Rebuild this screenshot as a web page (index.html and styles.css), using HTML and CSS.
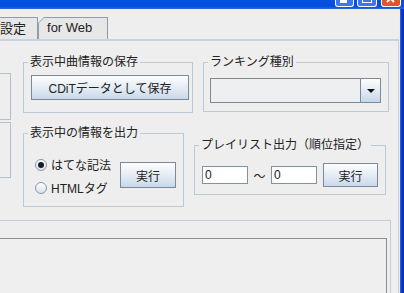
FILE: index.html
```html
<!DOCTYPE html>
<html lang="ja">
<head>
  <meta charset="UTF-8" />
  <title>設定</title>
  <link rel="stylesheet" href="styles.css">
</head>
<body>

  <div class="window">
    <!-- title bar, only the bottom of it is in view -->
    <div class="titlebar">
      <span class="tb-btn tb-min">
        <svg viewBox="0 0 17 6"><rect x="4" y="0" width="7" height="3" fill="#fff"/></svg>
      </span>
      <span class="tb-btn tb-max">
        <svg viewBox="0 0 18 6"><rect x="4.5" y="-4.5" width="9" height="7" fill="none" stroke="#fff"/></svg>
      </span>
      <span class="tb-btn tb-close">
        <svg viewBox="0 0 18 6"><path d="M5 -5 L12 2 M12 -5 L5 2" stroke="#fff" stroke-width="2"/></svg>
      </span>
    </div>

    <div class="frame">
      <div class="client">

        <div class="tabs">
          <div class="tab tab-first">設定</div>
          <div class="tab-web"><span class="tab-web-face">for Web</span></div>
        </div>

        <div class="pane">
          <div class="tab-content">

            <div class="side">
              <div class="side-box side-box-1"></div>
              <div class="side-box side-box-2"></div>
            </div>

            <div class="groups">
              <div class="group-row row-top">
                <fieldset class="group group-save">
                  <legend>表示中曲情報の保存</legend>
                  <button class="btn btn-save">CDiTデータとして保存</button>
                </fieldset>

                <fieldset class="group group-rank">
                  <legend>ランキング種別</legend>
                  <div class="combo">
                    <div class="combo-value"></div>
                    <div class="combo-arrow">
                      <svg width="8" height="4" viewBox="0 0 8 4"><polygon points="0,0 8,0 4,4" fill="#111"/></svg>
                    </div>
                  </div>
                </fieldset>
              </div>

              <div class="group-row row-bottom">
                <fieldset class="group group-out">
                  <legend>表示中の情報を出力</legend>
                  <div class="out-body">
                    <div class="radios">
                      <label class="radio-row"><span class="radio on"></span>はてな記法</label>
                      <label class="radio-row"><span class="radio"></span>HTMLタグ</label>
                    </div>
                    <button class="btn btn-run-out">実行</button>
                  </div>
                </fieldset>

                <fieldset class="group group-list">
                  <legend>プレイリスト出力（順位指定）</legend>
                  <div class="list-body">
                    <div class="field">0</div>
                    <span class="tilde">〜</span>
                    <div class="field">0</div>
                    <button class="btn btn-run-list">実行</button>
                  </div>
                </fieldset>
              </div>
            </div>

          </div>

          <div class="lower">
            <div class="text-area"></div>
          </div>
        </div>

      </div>
      <div class="frame-edge"></div>
    </div>
  </div>

</body>
</html>
```

FILE: styles.css
```css
body {
  margin: 0;
  font-family: "Liberation Sans", "Noto Sans CJK JP", sans-serif;
  font-size: 12px;
  color: #222;
  background: #eeeeee;
}

.window {
  width: 404px;
  height: 293px;
  overflow: hidden;
  display: flex;
  flex-direction: column;
}

/* title bar */
.titlebar {
  height: 9px;
  flex: none;
  display: flex;
  justify-content: flex-end;
  align-items: flex-end;
  padding-right: 3px;
  background: linear-gradient(#0054e3, #0a4dd8 70%, #2a66e2);
}

.tb-btn {
  height: 7px;
  margin-bottom: 2px;
  border: 1px solid #fff;
  border-top: 0;
  border-radius: 0 0 3px 3px;
  box-sizing: border-box;
}

.tb-btn svg {
  display: block;
  width: 100%;
  height: 100%;
}

.tb-min {
  width: 19px;
  margin-right: 3px;
  background: #3a78ee;
}

.tb-max {
  width: 20px;
  margin-right: 4px;
  background: #3a78ee;
}

.tb-close {
  width: 20px;
  background: #e0552e;
}

.frame {
  flex: 1;
  display: flex;
  min-height: 0;
}

.client {
  flex: 1;
  display: flex;
  flex-direction: column;
}

.frame-edge {
  width: 4px;
  background: linear-gradient(to right, #3d6fdc, #0a3ed2 35%, #0029b8);
}

/* tabs */
.tabs {
  display: flex;
  margin-top: 8px;
  height: 22px;
  flex: none;
}

.tab {
  box-sizing: border-box;
  height: 22px;
  font-size: 13px;
  line-height: 21px;
  background: #e7e7e7;
  border: 1px solid #8f9cab;
  border-bottom: 0;
}

.tab-first {
  margin-left: -14px;
  padding: 0 11px 0 13px;
}

.tab-web {
  width: 70px;
  height: 22px;
  box-sizing: border-box;
  padding: 1px 1px 0 1px;
  background: #8f9cab;
  clip-path: polygon(6px 0, 100% 0, 100% 100%, 0 100%, 0 6px);
}

.tab-web-face {
  display: block;
  height: 21px;
  padding-left: 8px;
  font-size: 13px;
  line-height: 20px;
  background: #e7e7e7;
  clip-path: polygon(5px 0, 100% 0, 100% 100%, 0 100%, 0 5px);
}

/* tab body */
.pane {
  flex: 1;
  display: flex;
  flex-direction: column;
  border-top: 2px solid #c5d3e2;
  border-right: 1px solid #c8d3df;
  margin-right: 1px;
}

.tab-content {
  height: 179px;
  flex: none;
  display: flex;
}

.side {
  width: 11px;
  flex: none;
  display: flex;
  flex-direction: column;
}

.side-box {
  box-sizing: border-box;
  border: 1px solid #b4c0cd;
  border-left: 0;
}

.side-box-1 {
  margin-top: 32px;
  height: 47px;
}

.side-box-2 {
  margin-top: 2px;
  height: 56px;
}

.groups {
  margin-left: 12px;
  display: flex;
  flex-direction: column;
}

.group-row {
  display: flex;
  align-items: flex-start;
}

.row-top {
  margin-top: 14px;
}

.row-bottom {
  margin-top: 13px;
}

.group {
  margin: 0;
  padding: 0;
  min-width: 0;
  box-sizing: border-box;
  border: 1px solid #bccad8;
}

.group legend {
  padding: 0 2px;
  margin-left: 4px;
  line-height: 14px;
}

.group-save {
  width: 170px;
}

.group-rank {
  width: 186px;
  margin-left: 10px;
}

.group-out {
  width: 161px;
}

.group-list {
  width: 192px;
  margin-left: 10px;
  margin-top: 12px;
}

/* controls */
.btn {
  box-sizing: border-box;
  height: 25px;
  padding: 0;
  border: 1px solid #7a8a99;
  border-radius: 0;
  background: linear-gradient(#fdfdfe, #e8eef6 45%, #c9d9ea);
  font: inherit;
  color: inherit;
  display: flex;
  align-items: center;
  justify-content: center;
}

.btn-save {
  width: 158px;
  margin: 6px 0 12px 7px;
}

.combo {
  box-sizing: border-box;
  width: 171px;
  height: 25px;
  margin: 9px 0 8px 6px;
  display: flex;
  border: 1px solid #7a8a99;
  background: linear-gradient(#f0f0f0, #ebeef2);
}

.combo-value {
  flex: 1;
}

.combo-arrow {
  width: 19px;
  border-left: 1px solid #7a8a99;
  background: linear-gradient(#fdfdfe, #e6edf5 45%, #c6d7ea);
  display: flex;
  align-items: center;
  justify-content: center;
}

.out-body {
  display: flex;
  padding: 13px 7px 7px 11px;
}

.radios {
  display: flex;
  flex-direction: column;
}

.radio-row {
  height: 23px;
  display: flex;
  align-items: center;
  gap: 4px;
}

.radio {
  box-sizing: border-box;
  width: 12px;
  height: 12px;
  border-radius: 50%;
  border: 1px solid #8a98a8;
  background: linear-gradient(#ffffff, #d6e1ee);
  display: flex;
  align-items: center;
  justify-content: center;
}

.radio.on::after {
  content: "";
  width: 6px;
  height: 6px;
  border-radius: 50%;
  background: #1c1c1c;
}

.btn-run-out {
  width: 56px;
  height: 26px;
  margin-left: auto;
  margin-top: 9px;
}

.list-body {
  display: flex;
  align-items: center;
  padding: 11px 6px 7px 7px;
}

.field {
  box-sizing: border-box;
  width: 46px;
  height: 18px;
  padding-left: 2px;
  line-height: 16px;
  border: 1px solid #7f93a8;
  background: #fff;
}

.tilde {
  width: 23px;
  text-align: center;
}

.btn-run-list {
  width: 55px;
  height: 24px;
  margin-left: 6px;
}

/* lower text area */
.lower {
  flex: 1;
  width: 391px;
  box-sizing: border-box;
  display: flex;
  padding: 17px 3px 0 0;
  border-top: 1px solid #c3cdd8;
  border-right: 1px solid #c3cdd8;
}

.text-area {
  flex: 1;
  border-top: 1px solid #8b8f94;
  border-right: 1px solid #8b8f94;
  background: #efefef;
}
```
